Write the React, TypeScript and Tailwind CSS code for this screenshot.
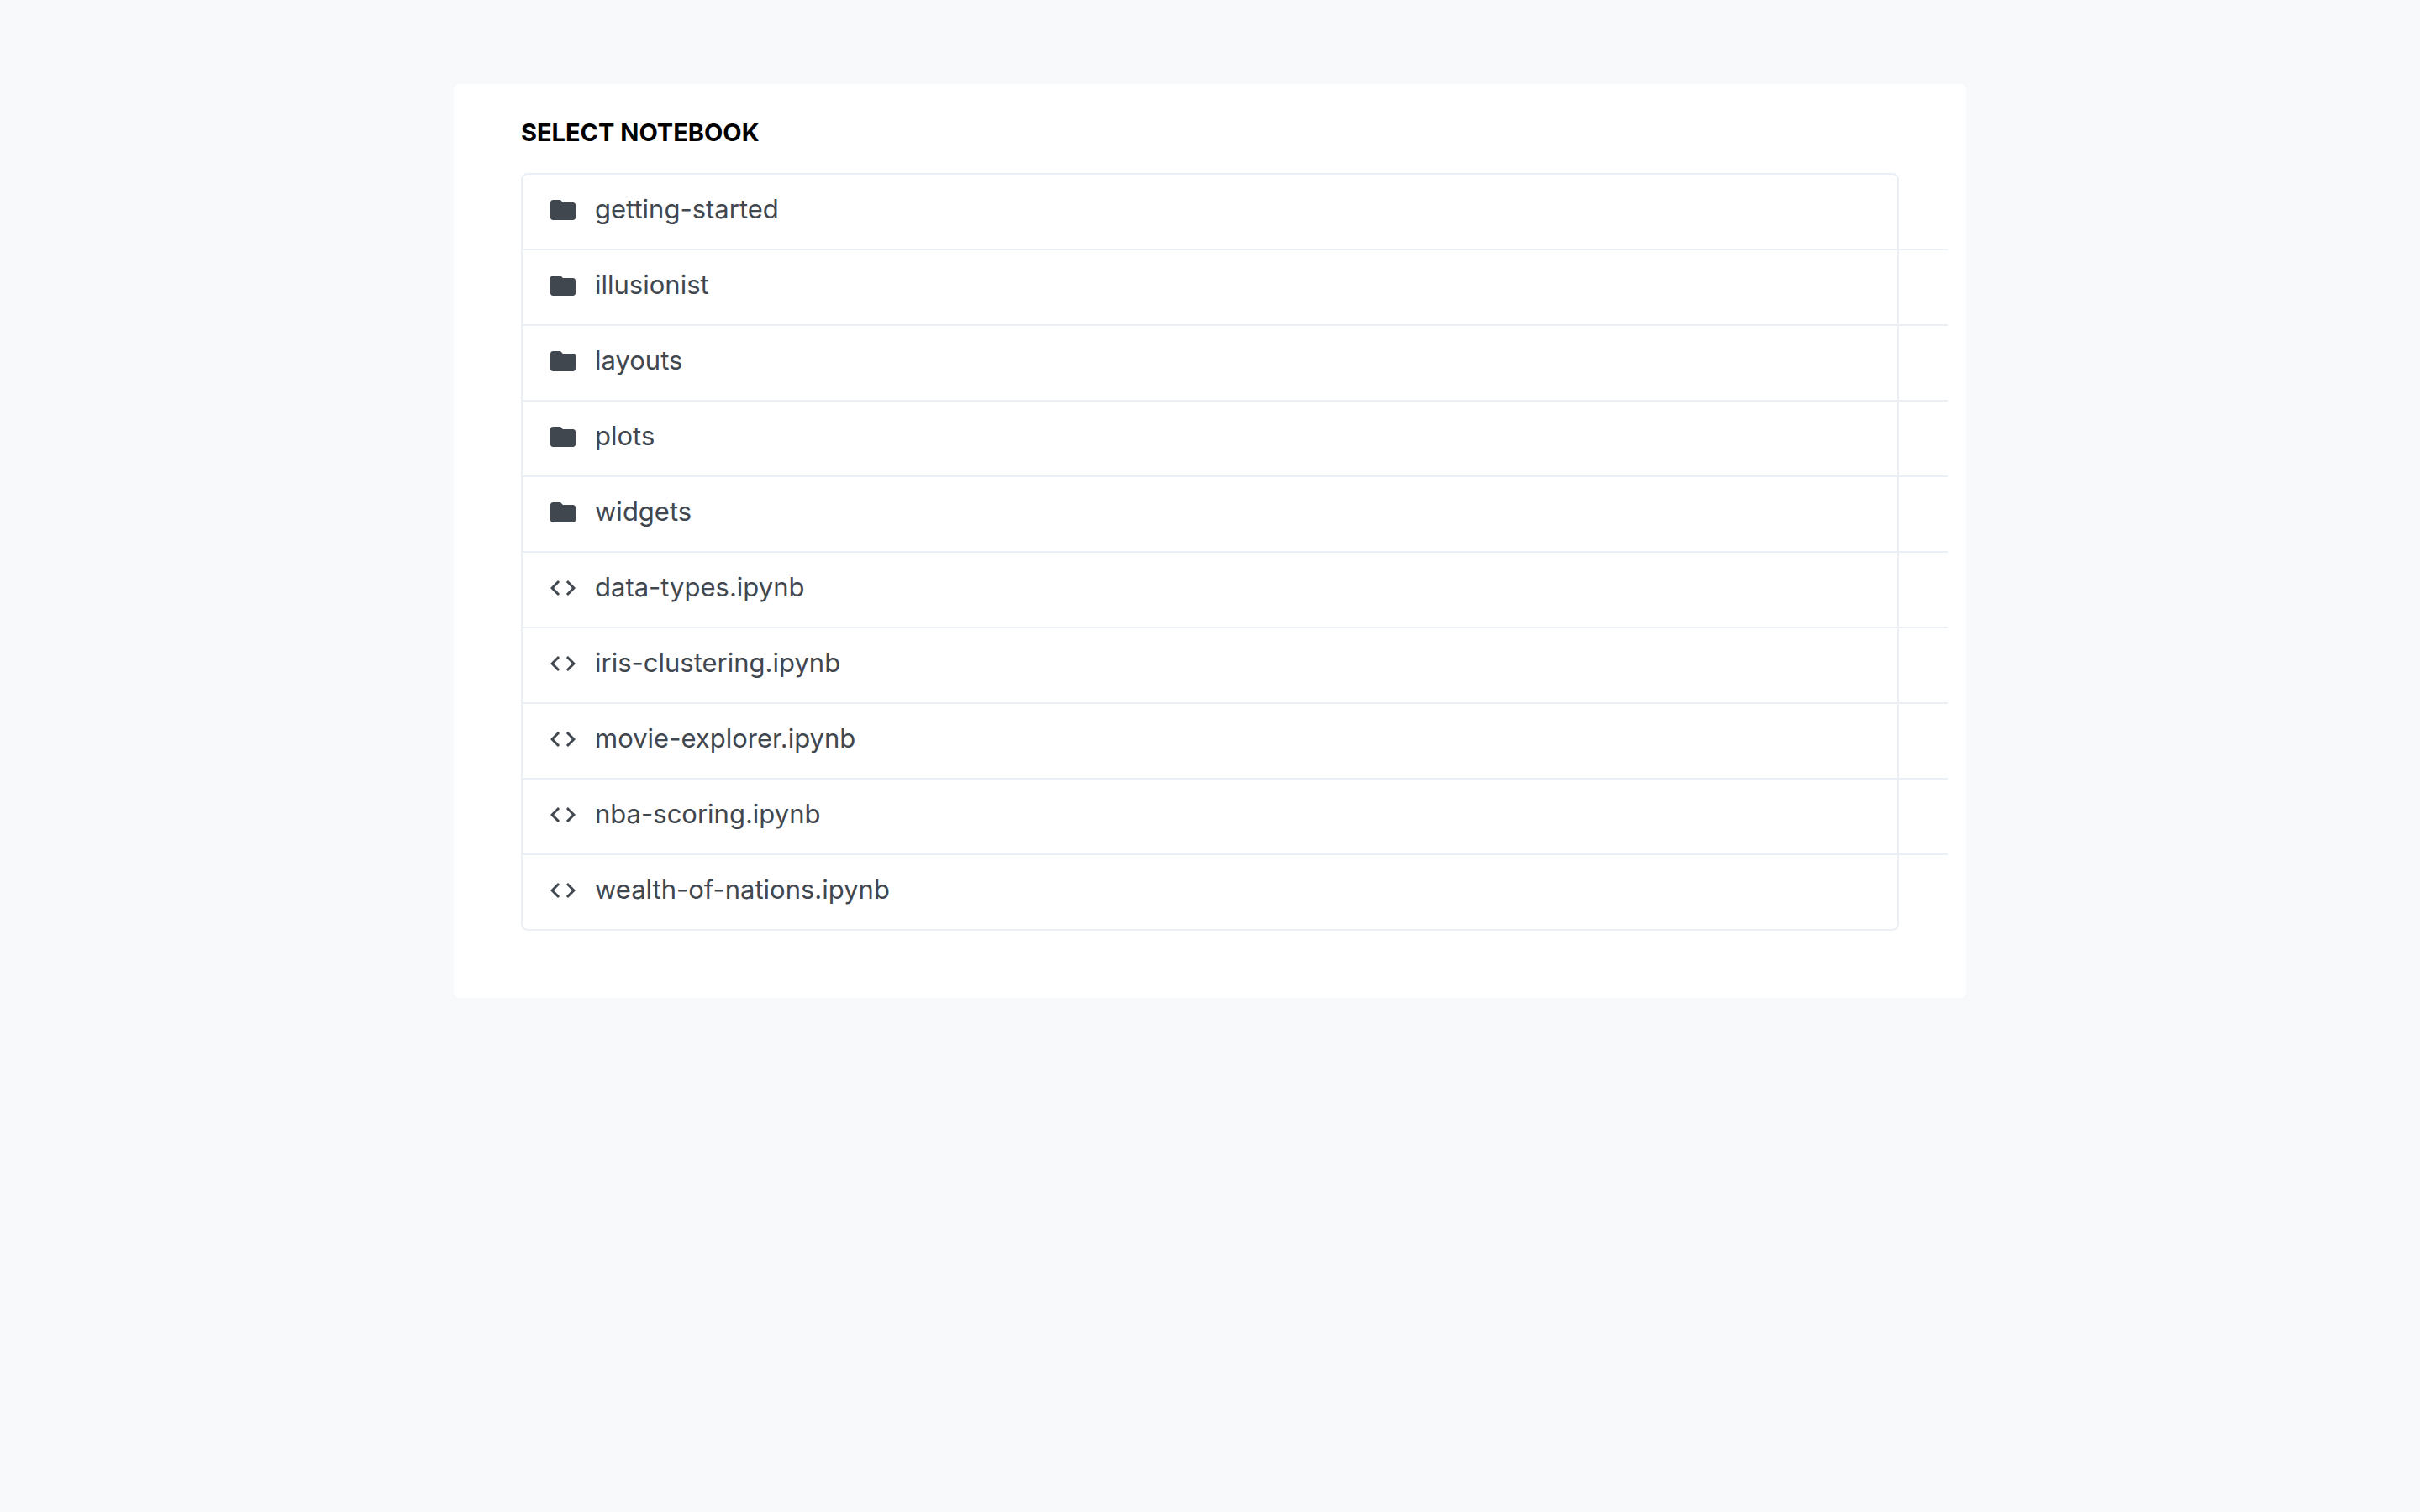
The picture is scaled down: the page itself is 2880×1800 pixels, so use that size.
import { MdCode, MdFolder } from "react-icons/md";

type Entry = { name: string; kind: "folder" | "notebook" };

const entries: Entry[] = [
  { name: "getting-started", kind: "folder" },
  { name: "illusionist", kind: "folder" },
  { name: "layouts", kind: "folder" },
  { name: "plots", kind: "folder" },
  { name: "widgets", kind: "folder" },
  { name: "data-types.ipynb", kind: "notebook" },
  { name: "iris-clustering.ipynb", kind: "notebook" },
  { name: "movie-explorer.ipynb", kind: "notebook" },
  { name: "nba-scoring.ipynb", kind: "notebook" },
  { name: "wealth-of-nations.ipynb", kind: "notebook" },
];

function EntryRow({ entry }: { entry: Entry }) {
  const Icon = entry.kind === "folder" ? MdFolder : MdCode;
  return (
    <li className="-mr-15 border-b-2 border-[#e9eff5] last:mr-0 last:border-b-0">
      <a href={`#${entry.name}`} className="flex h-22 items-center gap-5 px-7.5 pb-1 text-[#41474f]">
        <Icon className="size-9 shrink-0" aria-hidden="true" />
        <span className="pb-0.5 text-[31px] leading-12">{entry.name}</span>
      </a>
    </li>
  );
}

export default function App() {
  return (
    <div className="min-h-screen bg-[#f8f9fb] px-8 py-25 font-['Inter',sans-serif]">
      <main className="mx-auto max-w-[1800px] rounded-lg bg-white px-20 pt-9 pb-20">
        <h1 className="text-[29px] leading-11 font-bold text-black uppercase">Select Notebook</h1>
        <ul className="mt-6.5 rounded-lg border-2 border-[#e9eff5]">
          {entries.map((entry) => (
            <EntryRow key={entry.name} entry={entry} />
          ))}
        </ul>
      </main>
    </div>
  );
}
